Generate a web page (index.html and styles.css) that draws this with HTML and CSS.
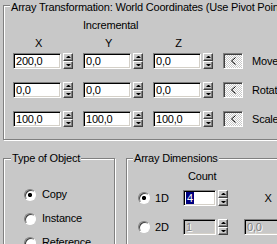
FILE: index.html
```html
<!DOCTYPE html>
<html>
	<head>
		<title>Array</title>
		<meta charset="UTF-8" />
		<link rel="stylesheet" href="styles.css">
	</head>
	<body>
		<div class="panel">
			<div class="group transform">
				<div class="caption">Array Transformation: World Coordinates (Use Pivot Point Center)</div>
				<div class="heading">Incremental</div>
				<div class="axes">
					<span class="axis">X</span>
					<span class="axis">Y</span>
					<span class="axis">Z</span>
				</div>
				<div class="row">
					<div class="spin"><div class="field">200,0</div><div class="spinner"><i class="up"></i><i class="down"></i></div></div>
					<div class="spin"><div class="field">0,0</div><div class="spinner"><i class="up"></i><i class="down"></i></div></div>
					<div class="spin"><div class="field">0,0</div><div class="spinner"><i class="up"></i><i class="down"></i></div></div>
					<div class="toggle"><svg width="16" height="12" viewBox="0 0 16 12"><polyline points="10.5,2.5 6.5,6 10.5,9.5" fill="none" stroke="#000" stroke-width="1"/></svg></div>
					<span class="label">Move</span>
				</div>
				<div class="row">
					<div class="spin"><div class="field">0,0</div><div class="spinner"><i class="up"></i><i class="down"></i></div></div>
					<div class="spin"><div class="field">0,0</div><div class="spinner"><i class="up"></i><i class="down"></i></div></div>
					<div class="spin"><div class="field">0,0</div><div class="spinner"><i class="up"></i><i class="down"></i></div></div>
					<div class="toggle"><svg width="16" height="12" viewBox="0 0 16 12"><polyline points="10.5,2.5 6.5,6 10.5,9.5" fill="none" stroke="#000" stroke-width="1"/></svg></div>
					<span class="label">Rotate</span>
				</div>
				<div class="row">
					<div class="spin"><div class="field">100,0</div><div class="spinner"><i class="up"></i><i class="down"></i></div></div>
					<div class="spin"><div class="field">100,0</div><div class="spinner"><i class="up"></i><i class="down"></i></div></div>
					<div class="spin"><div class="field">100,0</div><div class="spinner"><i class="up"></i><i class="down"></i></div></div>
					<div class="toggle"><svg width="16" height="12" viewBox="0 0 16 12"><polyline points="10.5,2.5 6.5,6 10.5,9.5" fill="none" stroke="#000" stroke-width="1"/></svg></div>
					<span class="label">Scale</span>
				</div>
			</div>
			<div class="lower">
				<div class="group type">
					<div class="caption">Type of Object</div>
					<div class="option"><span class="radio checked"></span>Copy</div>
					<div class="option"><span class="radio"></span>Instance</div>
					<div class="option"><span class="radio"></span>Reference</div>
				</div>
				<div class="group dims">
					<div class="caption">Array Dimensions</div>
					<div class="count">Count</div>
					<div class="dim-row">
						<div class="dim"><span class="radio checked"></span>1D</div>
						<div class="spin"><div class="field small"><span class="selected">4</span></div><div class="spinner"><i class="up"></i><i class="down"></i></div></div>
						<span class="axis-x">X</span>
					</div>
					<div class="dim-row">
						<div class="dim"><span class="radio"></span>2D</div>
						<div class="spin"><div class="field small disabled">1</div><div class="spinner"><i class="up"></i><i class="down"></i></div></div>
						<div class="field disabled">0,0</div>
					</div>
				</div>
			</div>
		</div>
	</body>
</html>
```

FILE: styles.css
```css
body {
	margin: 0;
	width: 277px;
	height: 244px;
	overflow: hidden;
	background: #c8c8c8;
	font: 11px/13px "Liberation Sans", Arial, sans-serif;
	letter-spacing: -0.2px;
	color: #000;
}

.panel {
	padding: 5px 0 0 3px;
}

.group {
	display: flex;
	flex-direction: column;
	align-items: flex-start;
	flex-shrink: 0;
	border: 1px solid #808080;
	box-shadow: 1px 1px 0 #fff, inset 1px 1px 0 #fff;
}

.caption {
	background: #c8c8c8;
	padding: 0 1px;
	white-space: nowrap;
}

.transform {
	width: 340px;
	padding: 0 0 12px 9px;
}

.transform .caption {
	margin: -5px 0 0 -3px;
}

.heading {
	margin: 5px 0 0 70px;
}

.axes {
	display: flex;
	margin-top: 5px;
}

.axis {
	width: 51px;
	margin-right: 19px;
	text-align: center;
}

.row {
	display: flex;
	align-items: center;
	gap: 10px;
	margin-top: 3px;
}

.row + .row {
	margin-top: 13px;
}

.spin {
	display: flex;
	flex-shrink: 0;
	gap: 2px;
}

.field {
	box-sizing: border-box;
	flex-shrink: 0;
	width: 48px;
	height: 16px;
	padding-left: 2px;
	line-height: 14px;
	background: #fff;
	border: 1px solid;
	border-color: #808080 #fff #fff #808080;
	box-shadow: inset 1px 1px 0 #000, inset -1px -1px 0 #d4d0c8;
	white-space: nowrap;
	overflow: hidden;
}

.field.small {
	width: 33px;
}

.field.disabled {
	background: #c8c8c8;
	color: #808080;
	text-shadow: 1px 1px 0 #fff;
}

.selected {
	display: inline-block;
	background: #000080;
	color: #fff;
	line-height: 12px;
	padding: 0 1px;
	margin-top: 1px;
	vertical-align: top;
}

.spinner {
	display: flex;
	flex-direction: column;
	width: 10px;
	height: 16px;
}

.spinner i {
	flex: 1;
	display: flex;
	align-items: center;
	justify-content: center;
	border: 1px solid;
	border-color: #fff #404040 #404040 #fff;
	box-shadow: inset -1px -1px 0 #808080;
}

.spinner i::before {
	content: "";
	width: 1px;
	border-left: 2px solid transparent;
	border-right: 2px solid transparent;
}

.spinner .up::before {
	border-bottom: 2px solid #000;
}

.spinner .down::before {
	border-top: 2px solid #000;
}

.toggle {
	box-sizing: border-box;
	flex-shrink: 0;
	width: 20px;
	height: 16px;
	border: 1px solid;
	border-color: #808080 #fff #fff #808080;
	box-shadow: inset 1px 1px 0 #404040;
	background: repeating-conic-gradient(#fff 0 25%, #c8c8c8 0 50%) 0 0 / 2px 2px;
	display: flex;
	align-items: center;
	justify-content: center;
}

.label {
	margin-left: -1px;
	white-space: nowrap;
}

.lower {
	display: flex;
	align-items: flex-start;
	gap: 11px;
	margin-top: 18px;
}

.type {
	width: 112px;
	height: 120px;
	box-sizing: border-box;
	padding-left: 20px;
}

.type .caption {
	margin: -7px 0 0 -13px;
}

.option {
	display: flex;
	align-items: center;
	gap: 6px;
	height: 13px;
	margin-top: 11px;
}

.type .caption + .option {
	margin-top: 23px;
}

.radio {
	box-sizing: border-box;
	flex-shrink: 0;
	width: 12px;
	height: 12px;
	border-radius: 50%;
	border: 1px solid;
	border-color: #808080 #fff #fff #808080;
	box-shadow: inset 1px 1px 0 #404040;
	background: #fff;
}

.radio.checked {
	background: radial-gradient(circle, #000 1.8px, #fff 2.4px);
}

.dims {
	width: 200px;
	height: 120px;
	padding-left: 11px;
}

.dims .caption {
	margin: -7px 0 0 -5px;
}

.count {
	margin: 5px 0 0 50px;
}

.dim-row {
	display: flex;
	align-items: center;
	margin-top: 13px;
}

.count + .dim-row {
	margin-top: 7px;
}

.dim {
	display: flex;
	align-items: center;
	gap: 5px;
	width: 45px;
	flex-shrink: 0;
}

.dim-row .spin {
	margin-right: 16px;
}

.axis-x {
	width: 48px;
	text-align: center;
}
```
